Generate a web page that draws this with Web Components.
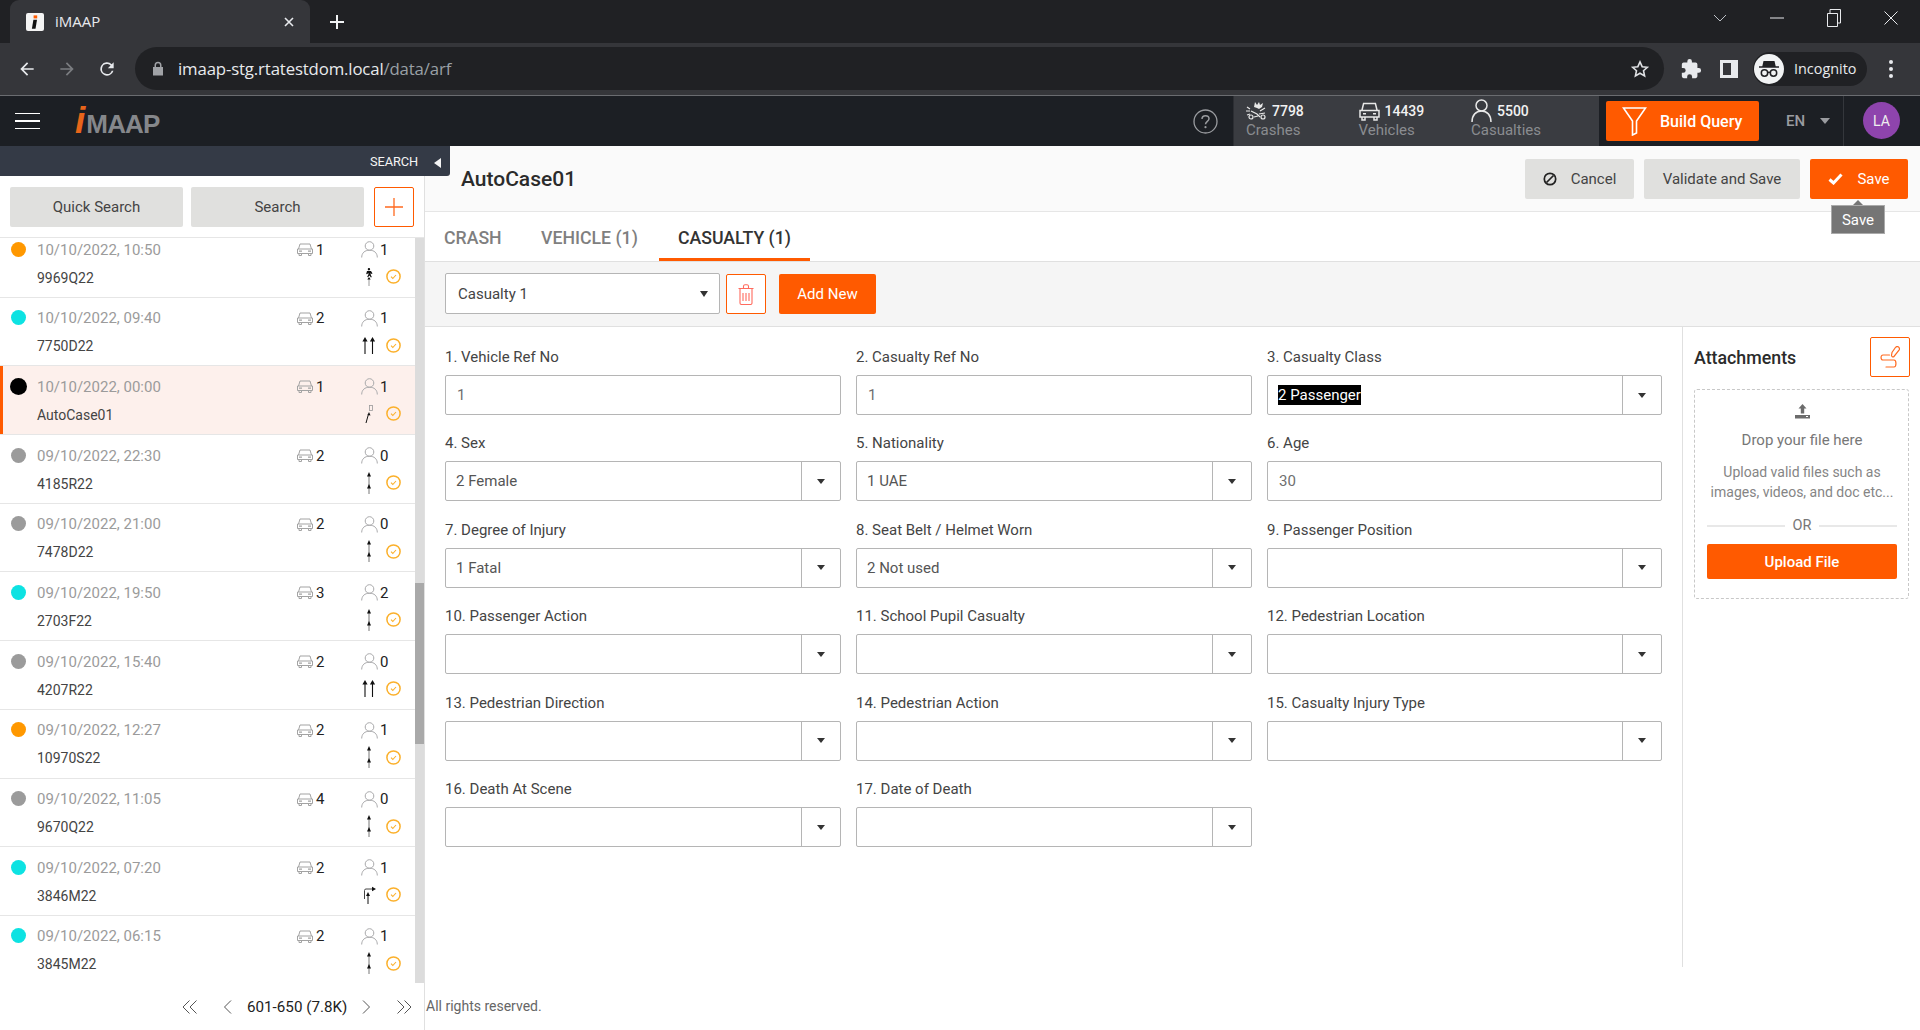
<!DOCTYPE html>
<html><head><meta charset="utf-8"><title>iMAAP</title>
<style>
html,body{margin:0;padding:0;height:100%;overflow:hidden;background:#fff;font-family:Roboto,"Liberation Sans",sans-serif;}
</style></head><body>
<imaap-app></imaap-app>
<script>
const ICON={
 back:'<svg width="20" height="20" viewBox="0 0 24 24"><path fill="#e8eaed" d="M20 11H7.8l5.6-5.6L12 4l-8 8 8 8 1.4-1.4L7.8 13H20z"/></svg>',
 fwd:'<svg width="20" height="20" viewBox="0 0 24 24"><path fill="#7b7d81" d="M4 11h12.2l-5.6-5.6L12 4l8 8-8 8-1.4-1.4 5.6-5.6H4z"/></svg>',
 reload:'<svg width="22" height="22" viewBox="0 0 24 24"><path fill="#e8eaed" d="M17.65 6.35A8 8 0 1 0 19.73 14h-2.08A6 6 0 1 1 12 6c1.66 0 3.14.69 4.22 1.78L13 11h7V4z"/></svg>',
 lock:'<svg width="12" height="15" viewBox="0 0 12 15"><path fill="#a0a2a6" d="M2.5 6V4.2a3.5 3.5 0 0 1 7 0V6H11v8.5H1V6zM4 6h4V4.2a2 2 0 0 0-4 0z"/></svg>',
 star:'<svg width="20" height="20" viewBox="0 0 24 24"><path fill="none" stroke="#e0e2e5" stroke-width="1.9" d="M12 3.5l2.6 5.7 6.2.7-4.6 4.2 1.3 6.1L12 17.1l-5.5 3.1 1.3-6.1-4.6-4.2 6.2-.7z"/></svg>',
 puzzle:'<svg width="22" height="22" viewBox="0 0 24 24"><path fill="#e8eaed" d="M20.5 11H19V7a2 2 0 0 0-2-2h-4V3.5a2.5 2.5 0 0 0-5 0V5H4a2 2 0 0 0-2 2v3.8h1.5a2.7 2.7 0 0 1 0 5.4H2V20a2 2 0 0 0 2 2h3.8v-1.5a2.7 2.7 0 0 1 5.4 0V22H17a2 2 0 0 0 2-2v-4h1.5a2.5 2.5 0 0 0 0-5z"/></svg>',
 panel:'<svg width="18" height="18" viewBox="0 0 18 18"><path fill="#e8eaed" d="M0 0h18v18H0zM3 3v12h8V3z"/></svg>',
 incog:'<svg width="30" height="30" viewBox="0 0 30 30"><circle cx="15" cy="15" r="15" fill="#f1f3f4"/><path fill="#202124" d="M9.5 7h11l1.2 5.2H25v1.6H5v-1.6h3.3z"/><g fill="none" stroke="#202124" stroke-width="1.5"><circle cx="10.5" cy="19" r="3.2"/><circle cx="19.5" cy="19" r="3.2"/><path d="M13.7 18.6c.9-.6 1.7-.6 2.6 0"/></g></svg>',
 dots:'<svg width="6" height="20" viewBox="0 0 6 20"><g fill="#e8eaed"><circle cx="3" cy="3" r="2"/><circle cx="3" cy="10" r="2"/><circle cx="3" cy="17" r="2"/></g></svg>',
 favicon:'<svg width="18" height="18" viewBox="0 0 18 18"><rect width="18" height="18" rx="2" fill="#f4f4f4"/><rect x="7.6" y="2.4" width="3.6" height="3" fill="#ff5a00"/><path fill="#111" d="M7.4 6.8h3.6l-1.5 9H5.9z"/></svg>',
 plus:'<svg width="16" height="16" viewBox="0 0 16 16"><path stroke="#f1f3f4" stroke-width="2" d="M8 1v14M1 8h14"/></svg>',
 close:'<svg width="10" height="10" viewBox="0 0 10 10"><path stroke="#e8eaed" stroke-width="1.6" d="M1 1l8 8M9 1l-8 8"/></svg>',
 wchev:'<svg width="14" height="8" viewBox="0 0 14 8"><path fill="none" stroke="#bdc1c6" d="M1 1l6 6 6-6"/></svg>',
 wmin:'<svg width="14" height="2" viewBox="0 0 14 2"><path stroke="#e8eaed" stroke-width="1" d="M0 1h14"/></svg>',
 wmax:'<svg width="14" height="18" viewBox="0 0 14 18"><path fill="none" stroke="#e8eaed" d="M.5 4.5h10v13H.5zM3 4.5v-4h10.5V14h-3"/></svg>',
 wx:'<svg width="14" height="14" viewBox="0 0 14 14"><path fill="none" stroke="#e8eaed" d="M.5.5l13 13M13.500.5l-13 13"/></svg>',
 help:'<svg width="25" height="25" viewBox="0 0 25 25"><circle cx="12.500" cy="12.500" r="11.500" fill="none" stroke="#9a9ca0" stroke-width="1.300"/><path fill="none" stroke="#9a9ca0" stroke-width="1.500" d="M9 10c0-2 1.500-3.300 3.500-3.300S16 8 16 9.800c0 2.400-3.500 2.700-3.500 5.400"/><circle cx="12.500" cy="18.200" r="1.100" fill="#9a9ca0"/></svg>',
 crash:'<svg width="21" height="20" viewBox="0 0 21 20"><g fill="none" stroke="#e8e8e8" stroke-width="1.200"><path d="M1 6l3 2M0 10h4M1 14l3-1M5 10l6 3 3 3M8 16l4-1M14 10l5-3M13 13l6-1"/><circle cx="5" cy="16" r="2"/><circle cx="17" cy="16" r="2"/></g><path fill="#e8e8e8" d="M8 6l1-5 2 3 2-3 1 3 3-2-1 4-3 2-2-1z"/></svg>',
 carW:'<svg width="21" height="20" viewBox="0 0 21 20"><g fill="none" stroke="#e8e8e8" stroke-width="1.500"><path d="M3 9l1.600-6.500h11.800L18 9M1 9.500h19v6.500H1zM3 16v3h3v-3M15 16v3h3v-3"/><path d="M4 12.700h3M14 12.700h3"/></g></svg>',
 personW:'<svg width="21" height="23" viewBox="0 0 21 23"><g fill="none" stroke="#e8e8e8" stroke-width="1.500"><circle cx="10.500" cy="6.500" r="5.500"/><path d="M1 23c0-7 4-11 9.500-11S20 16 20 23"/></g></svg>',
 filter:'<svg width="25" height="30" viewBox="0 0 25 30"><path fill="none" stroke="#fff" stroke-width="1.600" d="M1.500 2h22l-9 13v12l-4 2V15z"/></svg>',
 plusO:'<svg width="20" height="20" viewBox="0 0 20 20"><path stroke="#ff6a1f" stroke-width="1.300" d="M10 1v18M1 10h18"/></svg>',
 car:'<svg width="16" height="13" viewBox="0 0 16 13"><g fill="none" stroke="#a3a3a3" stroke-width="1"><path d="M1.500 6L3 1h10l1.500 5M.5 6h15v4.500H.5zM2 10.500V12.500h2.500v-2M11.500 10.500V12.500H14v-2"/></g><path fill="#a3a3a3" d="M2 7.500h3v1.200H2zM11 7.500h3v1.200h-3z"/></svg>',
 person:'<svg width="17" height="17" viewBox="0 0 17 17"><g fill="none" stroke="#a9a9ab" stroke-width="1"><circle cx="8.500" cy="5" r="4.300"/><path d="M.7 16.500c0-4.500 3-7.300 7.800-7.300s7.800 2.800 7.800 7.300"/></g></svg>',
 check:'<svg width="15" height="15" viewBox="0 0 15 15"><circle cx="7.500" cy="7.500" r="6.600" fill="none" stroke="#fbb02b" stroke-width="1.500"/><path fill="none" stroke="#fbb02b" stroke-width="1.100" d="M5 7.700l1.800 1.800L10 6"/></svg>',
 stack:'<svg width="10" height="22" viewBox="0 0 10 22"><path stroke="#777" d="M5 2v20"/><path fill="#111" d="M5 0l2 4.500H3zM5 12l2 4.500H3z"/></svg>',
 dbl:'<svg width="14" height="17" viewBox="0 0 14 17"><g stroke="#111" stroke-width="1.100"><path d="M3 3v14M10.500 3v14"/></g><path fill="#111" d="M3 0l2.600 4.500H.4zM10.500 0l2.600 4.500H7.900z"/></svg>',
 walk:'<svg width="10" height="18" viewBox="0 0 10 18"><path stroke="#999" d="M5 10v8"/><path fill="#111" d="M5 9l1.700 2.500H3.300zM5 0a1.200 1.200 0 1 1-.1 2.400A1.200 1.200 0 0 1 5 0zM3 3h4l1.500 2.500-1 .5L6.500 5l.3 2 1 2-.9.400L5.500 7.500 4 9.300l-.8-.5 1.200-2.300V5L3 6.300l-.8-.4z"/></svg>',
 slash:'<svg width="10" height="18" viewBox="0 0 10 18"><rect x="5.500" y=".5" width="3" height="5" fill="none" stroke="#999" stroke-width=".8"/><path stroke="#111" d="M4.500 9L2 18"/><path fill="#111" d="M5 7l1.500 3.500-3-.6z"/></svg>',
 turn:'<svg width="13" height="18" viewBox="0 0 13 18"><path fill="none" stroke="#444" d="M1.500 13V4.500A1.500 1.500 0 0 1 3 3h7"/><path fill="#111" d="M13 3L9 .8v4.400zM5 6l2 4H3z"/><path stroke="#111" d="M5 9v9"/></svg>',
 ban:'<svg width="14" height="14" viewBox="0 0 14 14"><circle cx="7" cy="7" r="5.700" fill="none" stroke="#222" stroke-width="1.700"/><path stroke="#222" stroke-width="1.700" d="M3.500 10.500l7-7"/></svg>',
 tick:'<svg width="15" height="12" viewBox="0 0 15 12"><path fill="none" stroke="#fff" stroke-width="3" d="M1.500 6.500L5.500 10l8-8.500"/></svg>',
 trash:'<svg width="16" height="21" viewBox="0 0 16 21"><g fill="none" stroke="#ff6b5e" stroke-width="1.100"><path d="M.5 4.500h15M2 4.500V19a1.500 1.500 0 0 0 1.500 1.500h9A1.500 1.500 0 0 0 14 19V4.500M5.500 4.500V2A1.500 1.500 0 0 1 7 .7h2A1.500 1.500 0 0 1 10.500 2v2.500M5 9v8M8 9v8M11 9v8"/></g></svg>',
 sign:'<svg width="20" height="22" viewBox="0 0 20 22"><g fill="none" stroke="#ff6a1f" stroke-width="1.200" stroke-linecap="round"><path d="M11.500 9.500c.2 1.300 1.200 1.800 2.300 1.200L19 4.200c.9-1.200.3-2.800-.8-3.400-1-.5-2.100-.2-2.800.7L12 6.500z"/><path d="M9.500 9H3C.4 9 .4 14 3 14h11c2.600 0 2.600 7 0 7H6"/></g></svg>',
 upload:'<svg width="15" height="15" viewBox="0 0 15 15"><path fill="#6c6c6c" d="M7.500 0l4 4.500H9.200v5H5.800v-5H3.500zM0 11h15v3.500H0z"/><path fill="#fff" d="M11 12h2v1h-2z"/></svg>',
 chevL2:'<svg width="16" height="14" viewBox="0 0 16 14"><path fill="none" stroke="#555" d="M7.500 .5L1 7l6.500 6.500M14.500 .5L8 7l6.500 6.500"/></svg>',
 chevR2:'<svg width="16" height="14" viewBox="0 0 16 14"><path fill="none" stroke="#555" d="M1.500 .5L8 7l-6.500 6.500M8.500 .5L15 7l-6.500 6.500"/></svg>',
 chevL:'<svg width="9" height="14" viewBox="0 0 9 14"><path fill="none" stroke="#555" d="M8 .5L1.500 7 8 13.500"/></svg>',
 chevR:'<svg width="9" height="14" viewBox="0 0 9 14"><path fill="none" stroke="#555" d="M1 .5L7.500 7 1 13.500"/></svg>'
};
const comp=(tag,css,render)=>customElements.define(tag,class extends HTMLElement{
 connectedCallback(){ if(this.shadowRoot) return;
  this.attachShadow({mode:'open'}).innerHTML='<style>'+css+'</style>'+render(this); }
});

comp('tab-strip',`
 :host{display:flex;height:43px;background:#202124;color:#e8eaed;font:15px "Open Sans","Noto Sans",sans-serif;align-items:flex-end;padding-right:1px}
 .tab{margin-left:10px;width:300px;height:43px;box-sizing:border-box;background:#35363a;border-radius:9px 9px 0 0;display:flex;align-items:center;padding:0 16px}
 .t{margin-left:11px;flex:1;position:relative;top:-1px}
 .p{margin-left:19px;height:43px;display:flex;align-items:center;width:16px}
 .sp{flex:1}
 .w{width:57px;height:36px;margin-bottom:7px;display:flex;align-items:center;justify-content:center}
`,()=>`<div class="tab">${ICON.favicon}<span class="t">iMAAP</span>${ICON.close}</div>
 <div class="p">${ICON.plus}</div><div class="sp"></div>
 <div class="w">${ICON.wchev}</div><div class="w">${ICON.wmin}</div><div class="w">${ICON.wmax}</div><div class="w">${ICON.wx}</div>`);

comp('tool-bar',`
 :host{display:flex;height:53px;box-sizing:border-box;background:#35363a;border-bottom:1px solid #6a6c70;align-items:center;padding:0 0 1px 17px}
 .b{width:20px;height:22px;display:flex;align-items:center;justify-content:center;margin-right:20px}
 .addr{flex:none;width:1529px;height:43px;margin-left:-2px;background:#202124;border-radius:22px;display:flex;align-items:center;padding:0 14px 0 17px;box-sizing:border-box;font:16.800px "Open Sans","Noto Sans",sans-serif;color:#e8eaed}
 .u{margin-left:14px;flex:1;letter-spacing:-.15px}.u i{font-style:normal;color:#9aa0a6}
 .e{display:flex;align-items:center}
 .pill{margin-left:15px;width:114px;height:34px;box-sizing:border-box;border-radius:17px;background:#202124;display:flex;align-items:center;padding-left:1px;font:14.400px "Open Sans","Noto Sans",sans-serif;color:#e8eaed;gap:10px}
`,()=>`<div class="b">${ICON.back}</div><div class="b">${ICON.fwd}</div><div class="b">${ICON.reload}</div>
 <div class="addr">${ICON.lock}<span class="u">imaap-stg.rtatestdom.local<i>/data/arf</i></span>${ICON.star}</div>
 <span class="e" style="margin-left:16px">${ICON.puzzle}</span><span class="e" style="margin-left:18px">${ICON.panel}</span>
 <div class="pill">${ICON.incog}<span>Incognito</span></div>
 <span class="e" style="margin-left:21px">${ICON.dots}</span>`);

comp('stat-item',`
 :host{display:block;width:112.500px;color:#8a8c90;font-size:15px}
 .r{display:flex;align-items:center;gap:5px;height:23px;color:#f1f1f1;font-size:14px;font-weight:500}
 .l{line-height:18px;margin-top:-1px}
`,h=>`<div class="r">${ICON[h.getAttribute('icon')]}<span>${h.getAttribute('n')}</span></div><div class="l">${h.getAttribute('label')}</div>`);

comp('app-header',`
 :host{display:flex;height:50px;background:#1c1f24;align-items:stretch;color:#fff}
 .burger{margin-left:15px;width:25px;display:flex;flex-direction:column;justify-content:center;gap:6px}
 .burger b{display:block;height:1.400px;background:#fff}
 .logo{margin-left:35px;display:flex;align-items:baseline;font-family:"Liberation Sans",sans-serif;font-weight:700;line-height:50px;height:50px;width:90px;white-space:nowrap}
 .logo i{color:#e8651a;font-size:37px;margin-right:1px}
 .logo span{color:#85878b;font-size:26px;letter-spacing:-.8px}
 .sp{flex:1}
 .help{display:flex;align-items:center;margin-right:15px}
 .stats{width:366px;box-sizing:border-box;background:#3a3c41;padding:3px 0 0 12px;display:flex;border-left:1px solid #2c2e33}
 .bq{margin:5px 0 5px 7px;width:153px;background:#ff5a00;border-radius:2px;display:flex;align-items:center;gap:13px;padding-left:16px;box-sizing:border-box;font-size:16px;font-weight:500}
 .lang{width:85px;box-sizing:border-box;display:flex;align-items:center;color:#9a9ca0;font-size:15px;font-weight:500;padding-left:27px;gap:15px;border-right:1px solid #34373c}
 .lang u{border:5px solid transparent;border-top:6px solid #9a9ca0;border-bottom:0;display:block}
 .av{flex:none;width:37px;height:37px;border-radius:50%;background:#8e44ad;margin:6px 20px 0 19px;display:flex;align-items:center;justify-content:center;font-size:14px;color:#eee}
`,()=>`<div class="burger"><b></b><b></b><b></b></div><div class="logo"><i>i</i><span>MAAP</span></div><div class="sp"></div>
 <div class="help">${ICON.help}</div>
 <div class="stats"><stat-item icon="crash" n="7798" label="Crashes"></stat-item><stat-item icon="carW" n="14439" label="Vehicles"></stat-item><stat-item icon="personW" n="5500" label="Casualties"></stat-item></div>
 <div class="bq">${ICON.filter}<span>Build Query</span></div>
 <div class="lang"><span>EN</span><u></u></div><div class="av">LA</div>`);

comp('case-row',`
 :host{display:grid;height:68.700px;box-sizing:border-box;border-bottom:1px solid #e6e6e6;grid-template-columns:37px 260px 64px 1fr;grid-template-rows:20px 20px;padding-top:10.500px;row-gap:8px;font-size:15px;color:#9b9b9b;position:relative}
 :host([sel]){background:#fdf0ec;box-shadow:inset 3px 0 0 #ff5a00}
 .dot{width:15px;height:15px;border-radius:50%;margin:2px 0 0 11px;background:var(--c)}
 :host([sel]) .dot{width:17px;height:17px;margin:1px 0 0 10px}
 .d{line-height:20px;white-space:nowrap}
 .n{display:flex;align-items:center;gap:3px;color:#222;height:20px}
 .id{grid-column:2;color:#444;font-size:14px;line-height:20px}
 .x{grid-column:3/5;justify-self:end;display:flex;align-items:center;height:20px;width:60px;margin:-1px -10px 0 0;position:relative}
 .rd{width:16px;display:flex;justify-content:center;margin-left:-4px}
 .ck{margin-left:9px;display:flex}
`,h=>{const a=k=>h.getAttribute(k);return `<div class="dot" style="--c:${a('c')}"></div><div class="d">${a('d')}</div>
 <div class="n">${ICON.car}<span>${a('v')}</span></div><div class="n" style="gap:2px">${ICON.person}<span>${a('p')}</span></div>
 <div class="id">${a('i')}</div><div class="x"><span class="rd">${ICON[a('r')]}</span><span class="ck">${ICON.check}</span></div>`});

const ROWS=[
['10/10/2022, 10:50','9969Q22',1,1,'#ff9800','walk'],['10/10/2022, 09:40','7750D22',2,1,'#0de2e2','dbl'],
['10/10/2022, 00:00','AutoCase01',1,1,'#000','slash',1],['09/10/2022, 22:30','4185R22',2,0,'#9b9b9b','stack'],
['09/10/2022, 21:00','7478D22',2,0,'#9b9b9b','stack'],['09/10/2022, 19:50','2703F22',3,2,'#0de2e2','stack'],
['09/10/2022, 15:40','4207R22',2,0,'#9b9b9b','dbl'],['09/10/2022, 12:27','10970S22',2,1,'#ff9800','stack'],
['09/10/2022, 11:05','9670Q22',4,0,'#9b9b9b','stack'],['09/10/2022, 07:20','3846M22',2,1,'#0de2e2','turn'],
['09/10/2022, 06:15','3845M22',2,1,'#0de2e2','stack']];

comp('case-list',`
 :host{display:flex;height:746px;border-top:1px solid #e6e6e6;overflow:hidden}
 .v{width:415px;overflow:hidden}
 .in{margin-top:-9px}
 .track{width:9px;background:#dcdcdc;padding-top:345px;box-sizing:border-box}
 .thumb{height:161px;background:#a9a9a9}
`,()=>`<div class="v"><div class="in">${ROWS.map(r=>`<case-row d="${r[0]}" i="${r[1]}" v="${r[2]}" p="${r[3]}" c="${r[4]}" r="${r[5]}" ${r[6]?'sel':''}></case-row>`).join('')}</div></div><div class="track"><div class="thumb"></div></div>`);

comp('pager-bar',`
 :host{display:flex;height:47px;align-items:center;font-size:15.200px;color:#222;position:relative}
 span{display:flex;align-items:center}
`,()=>`<span style="margin-left:182px">${ICON.chevL2}</span><span style="margin-left:25px">${ICON.chevL}</span><span style="margin-left:15px;white-space:nowrap">601-650 (7.8K)</span><span style="margin-left:15px">${ICON.chevR}</span><span style="margin-left:25px">${ICON.chevR2}</span>`);

comp('side-panel',`
 :host{display:flex;flex-direction:column;width:424px;flex:none;border-right:1px solid #e0e0e0;background:#fff}
 .strip{width:450px;height:30px;flex:none;background:#343a46;border-radius:0 0 3px 0;display:flex;align-items:center;justify-content:flex-end;color:#f4f4f4;font-size:12.800px;position:relative;z-index:2;box-sizing:border-box;padding-right:9px;letter-spacing:-.1px}
 .strip u{margin-left:16px;border:5px solid transparent;border-right:7px solid #f4f4f4;border-left:0;display:block;margin-top:3px}
 .btns{display:flex;padding:11px 0 10px 10px;gap:8px;height:61px;box-sizing:border-box;flex:none}
 .g{width:173px;height:40px;background:#e0e0de;border-radius:2px;display:flex;align-items:center;justify-content:center;font-size:15px;color:#444}
 .o{width:40px;height:40px;box-sizing:border-box;border:1px solid #ff5a00;border-radius:2px;display:flex;align-items:center;justify-content:center;margin-left:2px}
`,()=>`<div class="strip"><span>SEARCH</span><u></u></div>
 <div class="btns"><div class="g">Quick Search</div><div class="g">Search</div><div class="o">${ICON.plusO}</div></div>
 <case-list></case-list><pager-bar></pager-bar>`);

comp('form-field',`
 :host{display:flex;flex-direction:column;gap:8px;font-size:15px}
 label{height:20px;line-height:20px;color:#444}
 .box{height:40px;box-sizing:border-box;border:1px solid #b5b5b5;border-radius:2px;background:#fff;display:flex;align-items:center;color:#555}
 .v{flex:1;padding-left:10px;white-space:nowrap}
 :host([kind=text]) .v{padding-left:11px;color:#6f6f6f}
 .a{width:38px;height:38px;border-left:1px solid #b5b5b5;display:flex;align-items:center;justify-content:center}
 .a u{border:4px solid transparent;border-top:5px solid #333;border-bottom:0;display:block}
 mark{background:#000;color:#fff;padding:1px 0}
`,h=>{const k=h.getAttribute('kind')||'select',val=h.getAttribute('value')||'',hl=h.hasAttribute('hl');
 return `<label>${h.getAttribute('label')}</label><div class="box"><div class="v">${hl?`<mark>${val}</mark>`:val}</div>${k==='select'?'<div class="a"><u></u></div>':''}</div>`});

comp('title-bar',`
 :host{display:flex;height:66px;box-sizing:border-box;background:#fafafa;border-bottom:1px solid #e6e6e6;align-items:flex-start;padding:13px 12px 0 36px;position:relative}
 h1{font-size:21px;font-weight:500;color:#2b2b2b;margin:0;line-height:40px;flex:1;padding-left:0}
 .b{height:40px;box-sizing:border-box;background:#e0e0de;border-radius:2px;display:flex;align-items:center;justify-content:center;font-size:15px;color:#444;margin-left:10px}
 .s{background:#ff5a00;color:#fff}
 .tip{position:absolute;right:35px;top:59px;width:54px;height:29px;background:#757575;color:#fff;font-size:15px;display:flex;align-items:center;justify-content:center;border:1px solid #aaa;box-sizing:border-box;z-index:3}
 .tip:before{content:"";position:absolute;left:50%;margin-left:-5px;top:-6px;border:5px solid transparent;border-bottom:5px solid #757575;border-top:0}
`,()=>`<h1>AutoCase01</h1>
 <div class="b" style="width:109px;gap:14px">${ICON.ban}<span>Cancel</span></div>
 <div class="b" style="width:156px">Validate and Save</div>
 <div class="b s" style="width:98px;gap:14px">${ICON.tick}<span>Save</span></div>
 <div class="tip">Save</div>`);

comp('tab-row',`
 :host{display:flex;height:50px;box-sizing:border-box;border-bottom:1px solid #e0e0e0;padding-left:19px;font-size:17.700px;font-weight:500;color:#7f7f7f}
 div{height:49px;display:flex;align-items:center}
 div span{position:relative;top:1px}
 .on{color:#333;width:151px;justify-content:center;box-shadow:inset 0 -3px 0 #ff5a00;margin-left:21px}
`,()=>`<div style="width:97px"><span>CRASH</span></div><div style="width:97px"><span>VEHICLE (1)</span></div><div class="on"><span>CASUALTY (1)</span></div>`);

comp('casualty-bar',`
 :host{display:flex;height:65px;box-sizing:border-box;background:#f5f5f5;border-bottom:1px solid #e0e0e0;padding:11px 0 0 20px;align-items:flex-start;font-size:15px}
 .sel{width:275px;height:41px;box-sizing:border-box;border:1px solid #b5b5b5;border-radius:2px;background:#fff;display:flex;align-items:center;padding:0 11px 0 12px;color:#444;justify-content:space-between}
 .sel u{border:4.500px solid transparent;border-top:6px solid #333;border-bottom:0;display:block}
 .del{width:40px;height:40px;box-sizing:border-box;border:1px solid #ff5a00;border-radius:2px;background:#fff;margin:1px 0 0 6px;display:flex;align-items:center;justify-content:center}
 .add{width:97px;height:40px;margin:1px 0 0 13px;background:#ff5a00;border-radius:2px;color:#fff;display:flex;align-items:center;justify-content:center}
`,()=>`<div class="sel"><span>Casualty 1</span><u></u></div><div class="del">${ICON.trash}</div><div class="add">Add New</div>`);

comp('case-form',`
 :host{display:grid;grid-template-columns:396px 396px 395px;column-gap:15px;row-gap:18.450px;align-content:start;padding:20px 0 0 20px;width:1258px;box-sizing:border-box;border-right:1px solid #e0e0e0;height:640px;flex:none}
`,()=>{const F=[['1. Vehicle Ref No','1','text'],['2. Casualty Ref No','1','text'],['3. Casualty Class','2 Passenger','select',1],['4. Sex','2 Female'],['5. Nationality','1 UAE'],['6. Age','30','text'],['7. Degree of Injury','1 Fatal'],['8. Seat Belt / Helmet Worn','2 Not used'],['9. Passenger Position',''],['10. Passenger Action',''],['11. School Pupil Casualty',''],['12. Pedestrian Location',''],['13. Pedestrian Direction',''],['14. Pedestrian Action',''],['15. Casualty Injury Type',''],['16. Death At Scene',''],['17. Date of Death','']];
 return F.map(f=>`<form-field label="${f[0]}" value="${f[1]}" kind="${f[2]||'select'}" ${f[3]?'hl':''}></form-field>`).join('')});

comp('attach-panel',`
 :host{display:block;flex:1;padding:10px 0 0 11px;box-sizing:border-box;font-size:15px;color:#777}
 .h{display:flex;align-items:center;justify-content:space-between;height:40px;padding-right:10px}
 h2{font-size:17.800px;font-weight:500;color:#2b2b2b;margin:0}
 .o{width:40px;height:40px;box-sizing:border-box;border:1px solid #ff5a00;border-radius:2px;display:flex;align-items:center;justify-content:center}
 .z{margin-top:12px;width:215px;height:210px;box-sizing:border-box;border:1px dashed #c8c8c8;border-radius:3px;padding:14px 11px 0 12px;text-align:center;display:flex;flex-direction:column;align-items:stretch}
 .up{height:15px;display:flex;justify-content:center}
 .dr{margin-top:11px;line-height:20px;color:#777}
 .t{margin-top:12px;font-size:14px;line-height:20px;color:#858585;white-space:nowrap}
 .or{margin-top:14px;display:flex;align-items:center;gap:8px;line-height:20px;color:#777;font-size:14.500px}
 .or b{flex:1;height:2px;background:#e8e8e8}
 .u{margin-top:8px;height:35px;background:#ff5a00;border-radius:2px;color:#fff;font-weight:500;display:flex;align-items:center;justify-content:center}
`,()=>`<div class="h"><h2>Attachments</h2><div class="o">${ICON.sign}</div></div>
 <div class="z"><div class="up">${ICON.upload}</div><div class="dr">Drop your file here</div><div class="t">Upload valid files such as<br>images, videos, and doc etc...</div>
 <div class="or"><b></b><span>OR</span><b></b></div><div class="u">Upload File</div></div>`);

comp('main-area',`
 :host{display:flex;flex-direction:column;flex:1;min-width:0;background:#fff}
 .body{display:flex;flex:none}
 .foot{flex:1;display:flex;align-items:center;font-size:14px;color:#666;padding-left:1px;padding-top:14px}
`,()=>`<title-bar></title-bar><tab-row></tab-row><casualty-bar></casualty-bar>
 <div class="body"><case-form></case-form><attach-panel></attach-panel></div><div class="foot">All rights reserved.</div>`);

comp('imaap-app',`
 :host{display:grid;grid-template-rows:43px 53px 50px 884px;width:1920px;height:1030px;overflow:hidden}
 .w{display:flex;min-height:0}
`,()=>`<tab-strip></tab-strip><tool-bar></tool-bar><app-header></app-header><div class="w"><side-panel></side-panel><main-area></main-area></div>`);
</script>
</body></html>
